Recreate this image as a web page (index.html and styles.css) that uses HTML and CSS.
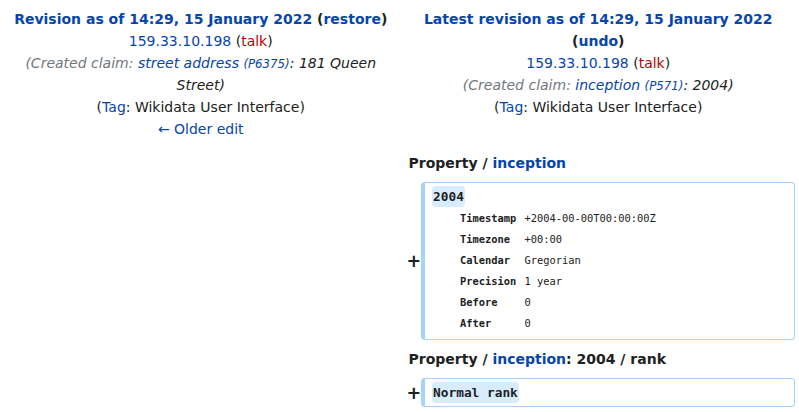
FILE: index.html
```html
<!DOCTYPE html>
<html>
<head>
<meta charset="utf-8">
<link rel="stylesheet" href="styles.css">
</head>
<body>
<table class="diff">
  <colgroup>
    <col class="col-marker"><col class="col-content"><col class="col-marker"><col class="col-content">
  </colgroup>
  <tr class="diff-title">
    <td colspan="2" class="diff-otitle">
      <div class="rev-title"><a class="link">Revision as of 14:29, 15 January 2022</a> <span class="paren">(<a class="link">restore</a>)</span></div>
      <div><a class="link">159.33.10.198</a> (<a class="new">talk</a>)</div>
      <div class="comment"><span class="auto">(Created claim: <a class="link">street address <small class="pid">(P6375)</small></a></span>: 181 Queen Street)</div>
      <div>(<a class="link">Tag</a>: Wikidata User Interface)</div>
      <div><a class="link">← Older edit</a></div>
    </td>
    <td colspan="2" class="diff-ntitle">
      <div class="rev-title"><a class="link">Latest revision as of 14:29, 15 January 2022</a> <span class="paren">(<a class="link">undo</a>)</span></div>
      <div><a class="link">159.33.10.198</a> (<a class="new">talk</a>)</div>
      <div class="comment"><span class="auto">(Created claim: <a class="link">inception <small class="pid">(P571)</small></a></span>: 2004)</div>
      <div>(<a class="link">Tag</a>: Wikidata User Interface)</div>
    </td>
  </tr>
  <tr>
    <td colspan="2"></td>
    <td colspan="2" class="diff-lineno">Property / <a class="link">inception</a></td>
  </tr>
  <tr>
    <td colspan="2"></td>
    <td class="diff-marker"><span class="plus">+</span></td>
    <td class="diff-added">
      <div class="value-line"><ins class="diffchange">2004</ins></div>
      <div class="details">
        <span class="lbl">Timestamp</span><span class="val">+2004-00-00T00:00:00Z</span>
        <span class="lbl">Timezone</span><span class="val">+00:00</span>
        <span class="lbl">Calendar</span><span class="val">Gregorian</span>
        <span class="lbl">Precision</span><span class="val">1 year</span>
        <span class="lbl">Before</span><span class="val">0</span>
        <span class="lbl">After</span><span class="val">0</span>
      </div>
    </td>
  </tr>
  <tr>
    <td colspan="2"></td>
    <td colspan="2" class="diff-lineno">Property / <a class="link">inception</a>: 2004 / rank</td>
  </tr>
  <tr>
    <td colspan="2"></td>
    <td class="diff-marker"><span class="plus">+</span></td>
    <td class="diff-added single">
      <div class="value-line"><ins class="diffchange">Normal rank</ins></div>
    </td>
  </tr>
</table>
</body>
</html>
```

FILE: styles.css
```css
html, body {
  margin: 0;
  padding: 0;
  background: #ffffff;
}
body {
  font-family: "DejaVu Sans", sans-serif;
  font-size: 14px;
  line-height: 22px;
  color: #202122;
}
.diff {
  width: 100%;
  table-layout: fixed;
  border-collapse: separate;
  border-spacing: 4px;
}
.col-marker { width: 2%; }
.col-content { width: 48%; }
td {
  padding: 0;
  vertical-align: top;
}
.link {
  color: #0645ad;
  text-decoration: none;
}
.new {
  color: #ba0000;
  text-decoration: none;
}
.diff-otitle, .diff-ntitle {
  text-align: center;
  padding: 4px 0 4px;
}
.diff-otitle > div, .diff-ntitle > div {
  line-height: 22px;
}
.rev-title {
  font-weight: bold;
}
.comment {
  font-style: italic;
}
.auto {
  color: #72777d;
}
.pid {
  font-size: 11.8px;
  line-height: 1;
}
.diff-lineno {
  font-weight: bold;
  padding: 4px 0 4px 7px;
}
.diff-marker {
  vertical-align: middle;
  text-align: right;
  font-weight: bold;
  font-size: 17.5px;
  line-height: 20px;
}
.plus {
  margin-right: -4px;
}
.diff-added {
  border: 1px solid #a3d3ff;
  border-left-width: 4px;
  border-radius: 4px;
  padding: 3px 7px 5px 7px;
  font-family: "DejaVu Sans Mono", monospace;
  font-size: 12.8px;
}
.diff-added.single {
  padding-bottom: 2px;
}
.value-line {
  line-height: 22px;
  height: 22px;
}
.diffchange {
  text-decoration: none;
  font-weight: bold;
  background: #d8ecff;
  border-radius: 4px;
  padding: 3px 1px;
}
.details {
  display: grid;
  grid-template-columns: max-content 1fr;
  column-gap: 8px;
  margin-left: 28px;
  font-size: 10.4px;
  line-height: 21px;
}
.lbl {
  font-weight: bold;
}
```
